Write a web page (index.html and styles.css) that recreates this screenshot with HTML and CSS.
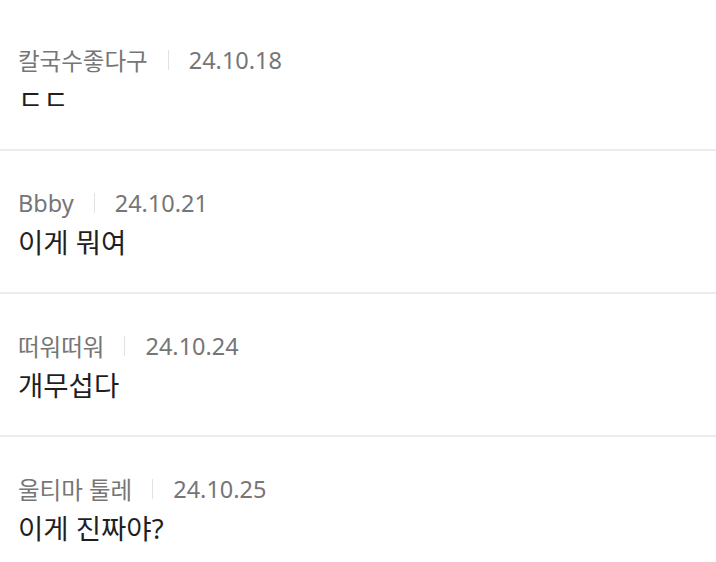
FILE: index.html
```html
<!DOCTYPE html>
<html lang="ko">
<head>
<meta charset="utf-8">
<link rel="stylesheet" href="styles.css">
</head>
<body>
<ul class="comments">
  <li class="comment">
    <div class="meta"><span class="author">칼국수좋다구</span><span class="bar"></span><span class="date">24.10.18</span></div>
    <p class="text">ㄷㄷ</p>
  </li>
  <li class="comment">
    <div class="meta"><span class="author">Bbby</span><span class="bar"></span><span class="date">24.10.21</span></div>
    <p class="text">이게 뭐여</p>
  </li>
  <li class="comment">
    <div class="meta"><span class="author">떠워떠워</span><span class="bar"></span><span class="date">24.10.24</span></div>
    <p class="text">개무섭다</p>
  </li>
  <li class="comment">
    <div class="meta"><span class="author">울티마 툴레</span><span class="bar"></span><span class="date">24.10.25</span></div>
    <p class="text">이게 진짜야?</p>
  </li>
</ul>
</body>
</html>
```
FILE: styles.css
```css
html, body {
  margin: 0;
  padding: 0;
  background: #ffffff;
}
body {
  font-family: "Noto Sans", "Noto Sans CJK KR", sans-serif;
  overflow: hidden;
}
.comments {
  list-style: none;
  margin: 0;
  padding: 8px 0 0 0;
}
.comment {
  padding: 37px 18px 31px 18px;
  border-bottom: 2px solid #ececec;
}
.meta {
  display: flex;
  align-items: center;
  height: 30px;
  font-size: 23.5px;
  color: #767676;
}
.bar {
  width: 1px;
  height: 20px;
  background: #e2e2e2;
  margin: 0 20px;
}
.text {
  margin: 7px 0 0 0;
  font-size: 27.5px;
  line-height: 36px;
  color: #1f1f1f;
}
```
